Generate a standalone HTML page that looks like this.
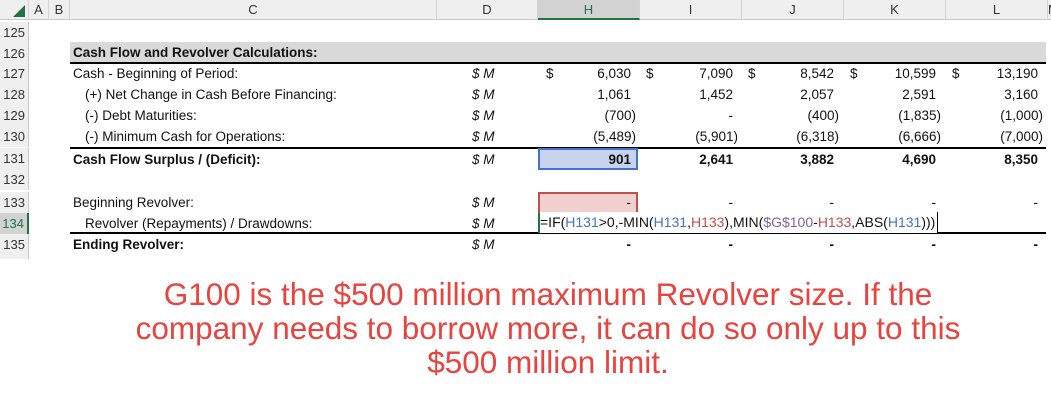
<!DOCTYPE html>
<html><head><meta charset="utf-8"><style>
body{margin:0;width:1051px;height:402px;background:#fff;overflow:hidden;position:relative;font-family:"Liberation Sans",Arial,sans-serif;}
.a{position:absolute;white-space:nowrap;}
.hdr{position:absolute;top:0;height:20px;background:#efefef;border-bottom:1px solid #c8c8c8;border-right:1px solid #d4d4d4;box-sizing:border-box;font-size:13px;color:#333;text-align:center;line-height:20px;}
.rn{position:absolute;left:0;width:29px;height:21px;background:#efefef;border-right:1px solid #c8c8c8;box-sizing:border-box;font-size:13px;color:#333;text-align:right;padding-right:3px;line-height:21px;}
.t{position:absolute;font-size:13.5px;color:#111;line-height:21px;height:21px;white-space:nowrap;}
.b{font-weight:bold;}
.u{position:absolute;font-size:13.5px;font-style:italic;left:472px;line-height:21px;color:#111;}
.v{position:absolute;font-size:13.5px;line-height:21px;text-align:right;width:90px;color:#111;}
.d{position:absolute;font-size:13.5px;line-height:21px;color:#111;}
.red{position:absolute;left:0;width:1096px;text-align:center;color:#e8433e;font-size:31.5px;line-height:34px;}
</style></head><body>
<div class="hdr" style="left:0;width:29px;"><svg width="29" height="20"><polygon points="25,5 25,17 13,17" fill="#217346"/></svg></div>
<div class="hdr" style="left:29px;width:20px;">A</div>
<div class="hdr" style="left:49px;width:21px;">B</div>
<div class="hdr" style="left:70px;width:367px;">C</div>
<div class="hdr" style="left:437px;width:101px;">D</div>
<div class="hdr" style="left:538px;width:102px;background:#d2d2d2;color:#217346;border-bottom:2px solid #217346;">H</div>
<div class="hdr" style="left:640px;width:102px;">I</div>
<div class="hdr" style="left:742px;width:102px;">J</div>
<div class="hdr" style="left:844px;width:102px;">K</div>
<div class="hdr" style="left:946px;width:102px;">L</div>
<div class="hdr" style="left:1048px;width:10px;">M</div>

<div class="rn" style="top:22px">125</div>
<div class="rn" style="top:43px">126</div>
<div class="rn" style="top:63px">127</div>
<div class="rn" style="top:84px">128</div>
<div class="rn" style="top:105px">129</div>
<div class="rn" style="top:126px">130</div>
<div class="rn" style="top:148px">131</div>
<div class="rn" style="top:169px">132</div>
<div class="rn" style="top:192px">133</div>
<div class="rn" style="top:213px;background:#d2d2d2;color:#217346;border-right:2px solid #217346;">134</div>
<div class="rn" style="top:234px">135</div>
<div class="rn" style="top:255px;height:4px"></div>

<div class="a" style="left:70px;top:42px;width:976px;height:20px;background:#d9d9d9;"></div>
<div class="a" style="left:70px;top:62px;width:976px;height:2px;background:#000;"></div>
<div class="a" style="left:70px;top:147px;width:976px;height:1.5px;background:#000;"></div>
<div class="a" style="left:70px;top:232px;width:976px;height:1.5px;background:#000;"></div>

<div class="t b" style="left:73px;top:42px">Cash Flow and Revolver Calculations:</div>
<div class="t" style="left:73px;top:63px">Cash - Beginning of Period:</div>
<div class="t" style="left:85px;top:84px">(+) Net Change in Cash Before Financing:</div>
<div class="t" style="left:85px;top:105px">(-) Debt Maturities:</div>
<div class="t" style="left:85px;top:126px">(-) Minimum Cash for Operations:</div>
<div class="t b" style="left:73px;top:149px">Cash Flow Surplus / (Deficit):</div>
<div class="t" style="left:73px;top:192px">Beginning Revolver:</div>
<div class="t" style="left:85px;top:213px">Revolver (Repayments) / Drawdowns:</div>
<div class="t b" style="left:73px;top:234px">Ending Revolver:</div>

<div class="u" style="top:63px">$ M</div><div class="u" style="top:84px">$ M</div><div class="u" style="top:105px">$ M</div><div class="u" style="top:126px">$ M</div><div class="u" style="top:149px">$ M</div><div class="u" style="top:192px">$ M</div><div class="u" style="top:213px">$ M</div><div class="u" style="top:234px">$ M</div>

<div class="d" style="left:546px;top:63px">$</div><div class="v" style="left:541px;top:63px">6,030</div>
<div class="d" style="left:646px;top:63px">$</div><div class="v" style="left:643px;top:63px">7,090</div>
<div class="d" style="left:748px;top:63px">$</div><div class="v" style="left:744px;top:63px">8,542</div>
<div class="d" style="left:850px;top:63px">$</div><div class="v" style="left:846px;top:63px">10,599</div>
<div class="d" style="left:952px;top:63px">$</div><div class="v" style="left:948px;top:63px">13,190</div>

<div class="v" style="left:541px;top:84px">1,061</div><div class="v" style="left:643px;top:84px">1,452</div><div class="v" style="left:744px;top:84px">2,057</div><div class="v" style="left:846px;top:84px">2,591</div><div class="v" style="left:948px;top:84px">3,160</div>

<div class="v" style="left:546px;top:105px">(700)</div><div class="v" style="left:643px;top:105px">-</div><div class="v" style="left:749px;top:105px">(400)</div><div class="v" style="left:851px;top:105px">(1,835)</div><div class="v" style="left:953px;top:105px">(1,000)</div>

<div class="v" style="left:546px;top:126px">(5,489)</div><div class="v" style="left:648px;top:126px">(5,901)</div><div class="v" style="left:749px;top:126px">(6,318)</div><div class="v" style="left:851px;top:126px">(6,666)</div><div class="v" style="left:953px;top:126px">(7,000)</div>

<div class="a" style="left:538px;top:148px;width:100px;height:22px;background:#c7d3ec;border:2px solid #4472c4;box-sizing:border-box;"></div>
<div class="v b" style="left:541px;top:149px">901</div><div class="v b" style="left:643px;top:149px">2,641</div><div class="v b" style="left:744px;top:149px">3,882</div><div class="v b" style="left:846px;top:149px">4,690</div><div class="v b" style="left:948px;top:149px">8,350</div>

<div class="a" style="left:538px;top:192px;width:100px;height:22px;background:#f2d0d0;border:2px solid #c0504d;box-sizing:border-box;"></div>
<div class="v" style="left:541px;top:192px">-</div><div class="v" style="left:643px;top:192px">-</div><div class="v" style="left:744px;top:192px">-</div><div class="v" style="left:846px;top:192px">-</div><div class="v" style="left:948px;top:192px">-</div>

<div class="a" style="left:538px;top:213px;width:100px;height:20px;border:2px solid #217346;border-top:none;box-sizing:border-box;background:#fff;"></div>
<div class="t" style="left:540px;top:212px;font-size:14px;background:#fff;padding-right:2px;border-right:1px solid #000;">=IF(<span style="color:#4472c4">H131</span>&gt;0,-MIN(<span style="color:#4472c4">H131</span>,<span style="color:#c0504d">H133</span>),MIN(<span style="color:#8064a2">$G$100</span>-<span style="color:#c0504d">H133</span>,ABS(<span style="color:#4472c4">H131</span>)))</div>

<div class="v b" style="left:541px;top:234px">-</div><div class="v b" style="left:643px;top:234px">-</div><div class="v b" style="left:744px;top:234px">-</div><div class="v b" style="left:846px;top:234px">-</div><div class="v b" style="left:948px;top:234px">-</div>

<div class="red" style="top:277px">G100 is the $500 million maximum Revolver size. If the</div>
<div class="red" style="top:311px">company needs to borrow more, it can do so only up to this</div>
<div class="red" style="top:345px">$500 million limit.</div>
</body></html>
